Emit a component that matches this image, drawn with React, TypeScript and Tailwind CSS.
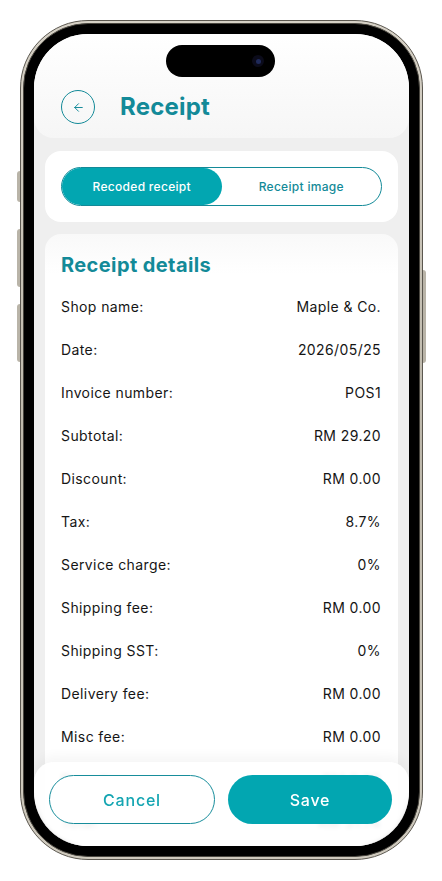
import { ArrowLeft } from 'lucide-react'

const rows: [string, string][] = [
  ['Shop name:', 'Maple & Co.'],
  ['Date:', '2026/05/25'],
  ['Invoice number:', 'POS1'],
  ['Subtotal:', 'RM 29.20'],
  ['Discount:', 'RM 0.00'],
  ['Tax:', '8.7%'],
  ['Service charge:', '0%'],
  ['Shipping fee:', 'RM 0.00'],
  ['Shipping SST:', '0%'],
  ['Delivery fee:', 'RM 0.00'],
  ['Misc fee:', 'RM 0.00'],
  ['Rounding:', 'RM 0.00'],
  ['Total:', 'RM 31.74'],
]

const font = { fontFamily: 'Inter, "Noto Sans", sans-serif' }

export default function App() {
  return (
    <div className="min-h-screen bg-white pl-5 pt-5" style={font}>
      {/* phone body */}
      <div className="relative h-[840px] w-[403px] rounded-[68px] border border-[#5c5850] bg-gradient-to-b from-[#d6d1c6] via-[#bdb8ab] to-[#cfcabe] p-[2px]">
        {/* side buttons */}
        <div className="absolute left-[-4px] top-[150px] h-[31px] w-[3px] rounded-l-sm bg-[#b9b4a8]" />
        <div className="absolute left-[-4px] top-[208px] h-[58px] w-[3px] rounded-l-sm bg-[#b9b4a8]" />
        <div className="absolute left-[-4px] top-[283px] h-[58px] w-[3px] rounded-l-sm bg-[#b9b4a8]" />
        <div className="absolute right-[-4px] top-[249px] h-[93px] w-[3px] rounded-r-sm bg-[#b9b4a8]" />

        <div className="h-full w-full rounded-[65px] border border-[#4a4740] bg-black p-[10px]">
          {/* screen */}
          <div className="relative flex h-full w-full flex-col overflow-hidden rounded-[54px] bg-[#efefef]">
            {/* dynamic island */}
            <div className="absolute left-[132px] top-[11px] flex h-[32px] w-[109px] items-center justify-end rounded-full bg-black pr-[11px]">
              <div className="flex h-[12px] w-[12px] items-center justify-center rounded-full bg-[#0b0b1a]">
                <div className="h-[5px] w-[5px] rounded-full bg-[#1f2a5a]" />
              </div>
            </div>

            {/* header */}
            <div className="flex h-[104px] shrink-0 items-end rounded-b-[20px] bg-gradient-to-b from-white to-[#f6f6f6] px-[27px] pb-[13px]">
              <div className="flex items-center gap-[25px]">
                <button className="flex h-[34px] w-[34px] items-center justify-center rounded-full border border-[#138a98] text-[#138a98]">
                  <ArrowLeft size={13} strokeWidth={1.8} />
                </button>
                <h1 className="text-[24px] font-bold tracking-[0.2px] text-[#138a98]">Receipt</h1>
              </div>
            </div>

            {/* toggle */}
            <div className="mx-[11px] mt-[13px] shrink-0 rounded-[16px] bg-white p-4">
              <div className="flex h-[39px] rounded-full border border-[#138a98] text-[12px] font-medium tracking-[0.3px]">
                <div className="flex flex-1 items-center justify-center rounded-full bg-[#02a6b1] text-white">Recoded receipt</div>
                <div className="flex flex-1 items-center justify-center text-[#138a98]">Receipt image</div>
              </div>
            </div>

            {/* details */}
            <div className="mx-[11px] mt-[12px] flex-1 rounded-t-[16px] bg-gradient-to-b from-[#f9f9f9] to-white to-[40px] px-4 pt-[19px]">
              <h2 className="mb-[8px] text-[20px] font-bold leading-[24px] tracking-[0.4px] text-[#138a98]">Receipt details</h2>
              {rows.map(([label, value]) => (
                <div key={label} className="flex h-[43px] items-center justify-between pr-px text-[14px] tracking-[0.4px] text-[#151515]">
                  <span>{label}</span>
                  <span>{value}</span>
                </div>
              ))}
            </div>

            {/* bottom actions */}
            <div className="absolute inset-x-0 bottom-0 flex h-[84px] gap-[13px] rounded-t-[20px] bg-white/90 pl-[15px] pr-[17px] pt-[13px] shadow-[0_-6px_12px_rgba(0,0,0,0.04)] backdrop-blur-[2px]">
              <button className="h-[49px] flex-1 rounded-full border border-[#178d9b] bg-white text-[16px] font-medium tracking-[0.8px] text-[#14a5b2]">
                Cancel
              </button>
              <button className="h-[49px] flex-1 rounded-full bg-[#02a6b1] text-[16px] font-medium tracking-[0.8px] text-white">Save</button>
            </div>
          </div>
        </div>
      </div>
    </div>
  )
}
